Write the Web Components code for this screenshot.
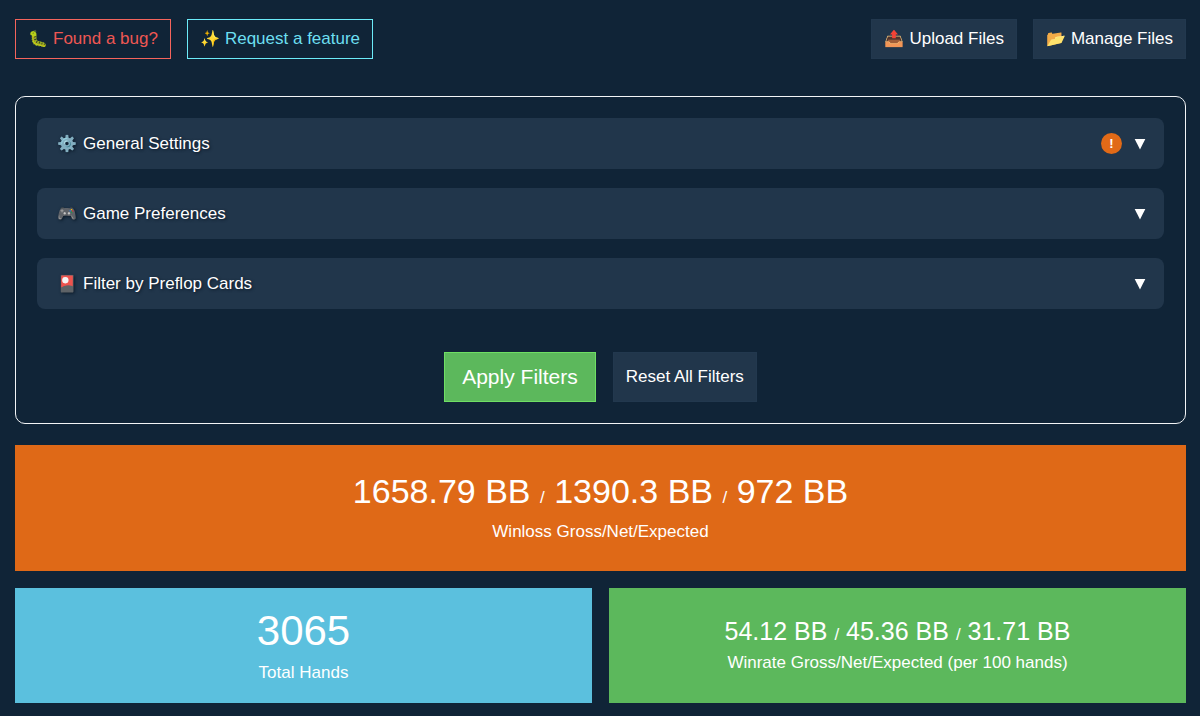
<!DOCTYPE html>
<html lang="en">
<head>
<meta charset="utf-8">
<title>Poker Results</title>
<style>
  body { margin: 0; background: #102437; color: #fff; font: 17px/20px "Liberation Sans", Arial, sans-serif; }
</style>
</head>
<body>
<tracker-page></tracker-page>

<template id="page-t">
  <style>
    :host { display: block; padding: 19px 14px 12px 15px; }
    header { display: flex; justify-content: space-between; margin-bottom: 37px; }
    nav { display: flex; gap: 16px; }
    main { display: grid; grid-template-columns: 1fr 1fr; gap: 17px; }
    filter-panel { grid-column: 1 / -1; margin-bottom: 4px; }
    stat-card.wide { grid-column: 1 / -1; }
  </style>
  <header>
    <nav>
      <action-button tone="danger"><span slot="icon">🐛</span>Found a bug?</action-button>
      <action-button tone="info"><span slot="icon">✨</span>Request a feature</action-button>
    </nav>
    <nav>
      <action-button><span slot="icon">📤</span>Upload Files</action-button>
      <action-button><span slot="icon">📂</span>Manage Files</action-button>
    </nav>
  </header>
  <main>
    <filter-panel>
      <filter-section alert><span slot="icon">⚙️</span>General Settings</filter-section>
      <filter-section><span slot="icon">🎮</span>Game Preferences</filter-section>
      <filter-section><span slot="icon">🎴</span>Filter by Preflop Cards</filter-section>
      <action-button slot="actions" tone="success">Apply Filters</action-button>
      <action-button slot="actions">Reset All Filters</action-button>
    </filter-panel>
    <stat-card class="wide" tone="orange" values="1658.79 BB|1390.3 BB|972 BB">Winloss Gross/Net/Expected</stat-card>
    <stat-card tone="blue" values="3065">Total Hands</stat-card>
    <stat-card tone="green" values="54.12 BB|45.36 BB|31.71 BB">Winrate Gross/Net/Expected (per 100 hands)</stat-card>
  </main>
</template>

<template id="button-t">
  <style>
    :host { display: flex; }
    button { display: flex; align-items: center; justify-content: center; gap: 5px; min-height: 40px; box-sizing: border-box; margin: 0; padding: 0 12px; border: 1px solid #22384e; background: #21364b; color: inherit; font: inherit; cursor: pointer; white-space: nowrap; }
    ::slotted([slot="icon"]) { font-size: 16px; }
    :host([tone="danger"]) button { background: none; border-color: #f4645c; color: #ee5753; }
    :host([tone="info"]) button { background: none; border-color: #6cebf8; color: #6ddff0; }
    :host([tone="success"]) button { background: #5cb85c; border-color: #6fdf64; font-size: 21px; padding: 0 17px; min-height: 50px; }
  </style>
  <button type="button"><slot name="icon"></slot><span><slot></slot></span></button>
</template>

<template id="panel-t">
  <style>
    :host { display: block; border: 1px solid #f2f4f6; border-radius: 10px; padding: 21px; }
    .sections { display: grid; gap: 19px; }
    .actions { display: flex; justify-content: center; gap: 17px; margin-top: 43px; }
  </style>
  <div class="sections"><slot></slot></div>
  <div class="actions"><slot name="actions"></slot></div>
</template>

<template id="section-t">
  <style>
    :host { display: block; }
    button { width: 100%; display: flex; align-items: center; gap: 6px; min-height: 51px; margin: 0; padding: 0 18px 0 20px; border: 0; border-radius: 8px; background: #21364b; color: inherit; font: inherit; text-align: left; cursor: pointer; text-shadow: 1px 1px 3px #0b1a29; }
    ::slotted([slot="icon"]) { font-size: 16px; }
    .label { flex: 1; }
    .badge { display: none; width: 21px; height: 21px; margin-right: 6px; border-radius: 50%; background: #e16a17; font: bold 13px/21px "Liberation Sans", Arial, sans-serif; text-align: center; text-shadow: none; }
    :host([alert]) .badge { display: block; }
    svg { width: 12px; height: 12px; }
  </style>
  <button type="button" aria-expanded="false">
    <slot name="icon"></slot><span class="label"><slot></slot></span>
    <span class="badge">!</span>
    <svg viewBox="0 0 12 12" aria-hidden="true"><path d="M.7 1h10.6L6 11.5z" fill="#fff"/></svg>
  </button>
</template>

<template id="stat-t">
  <style>
    :host { display: flex; flex-direction: column; align-items: center; box-sizing: border-box; min-height: 115px; text-align: center; }
    .value { white-space: nowrap; }
    small { font-size: 17px; }
    :host([tone="orange"]) { background: #df6917; min-height: 126px; padding-top: 26px; }
    :host([tone="orange"]) .value { font-size: 34px; line-height: 40px; margin-bottom: 4px; }
    :host([tone="blue"]) { background: #5bc0de; padding-top: 20px; }
    :host([tone="blue"]) .value { font-size: 42px; line-height: 46px; margin-bottom: 9px; }
    :host([tone="green"]) { background: #5cb85c; padding-top: 28px; }
    :host([tone="green"]) .value { font-size: 25px; line-height: 30px; margin-bottom: 3px; }
  </style>
  <div class="value"></div>
  <div><slot></slot></div>
</template>

<script>
  class TemplateElement extends HTMLElement {
    constructor() {
      super();
      const template = document.getElementById(this.constructor.template);
      this.attachShadow({ mode: "open" }).append(template.content.cloneNode(true));
    }
  }
  class ActionButton extends TemplateElement { static template = "button-t"; }
  class FilterPanel extends TemplateElement { static template = "panel-t"; }
  class FilterSection extends TemplateElement { static template = "section-t"; }
  class StatCard extends TemplateElement {
    static template = "stat-t";
    connectedCallback() {
      const target = this.shadowRoot.querySelector(".value");
      target.textContent = "";
      (this.getAttribute("values") || "").split("|").forEach((value, i) => {
        if (i) {
          const slash = document.createElement("small");
          slash.textContent = "/";
          target.append(" ", slash, " ");
        }
        target.append(value);
      });
    }
  }
  class TrackerPage extends TemplateElement { static template = "page-t"; }
  customElements.define("action-button", ActionButton);
  customElements.define("filter-panel", FilterPanel);
  customElements.define("filter-section", FilterSection);
  customElements.define("stat-card", StatCard);
  customElements.define("tracker-page", TrackerPage);
</script>
</body>
</html>
